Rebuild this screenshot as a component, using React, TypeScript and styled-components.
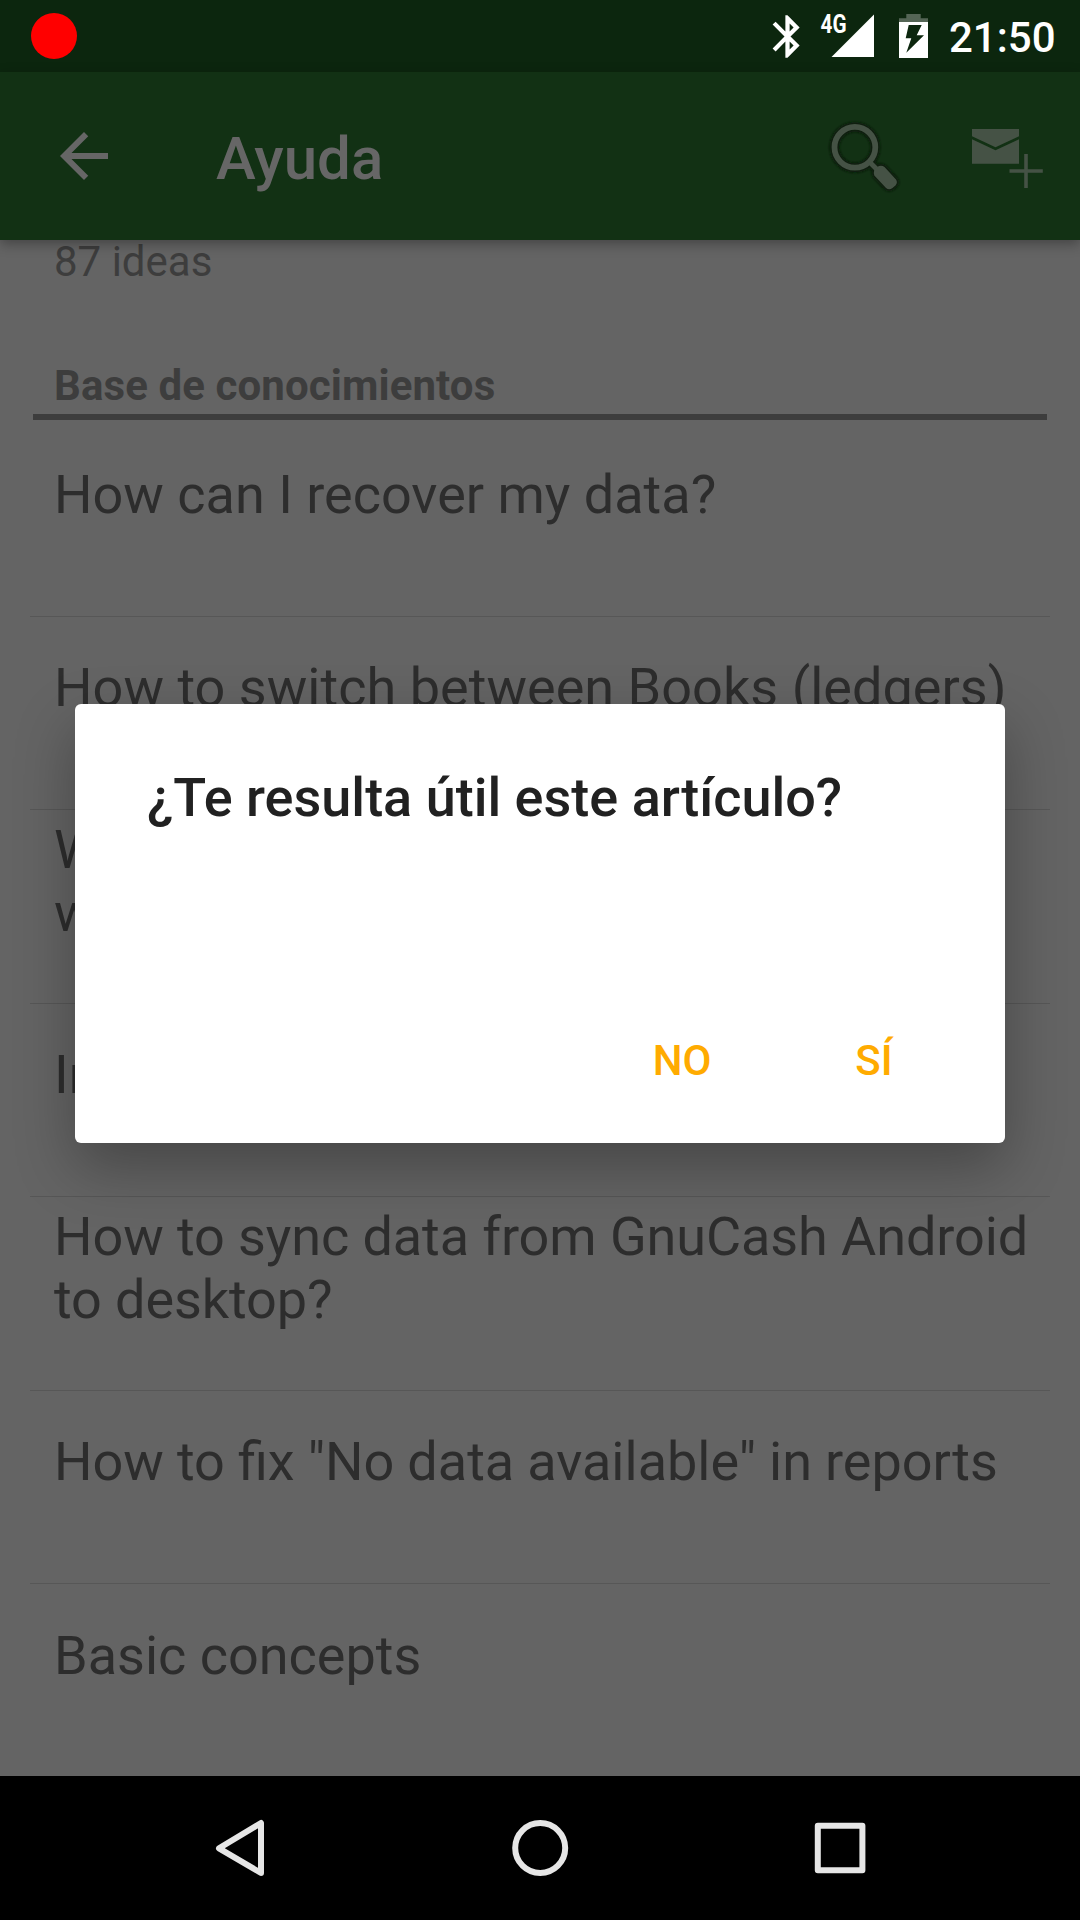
import React from 'react';
import styled, { createGlobalStyle } from 'styled-components';

const GlobalStyle = createGlobalStyle`
  *, *::before, *::after { box-sizing: border-box; }
  body { margin: 0; background: #000; }
  h1, h2, ul, p { margin: 0; padding: 0; }
`;

const Screen = styled.div`
  position: relative;
  width: 1080px;
  height: 1920px;
  overflow: hidden;
  display: flex;
  flex-direction: column;
  background: #646464;
  font-family: Roboto, "Noto Sans", sans-serif;
  font-kerning: normal;
`;

const StatusBar = styled.header`
  flex: none;
  height: 72px;
  display: flex;
  align-items: center;
  justify-content: space-between;
  padding: 0 25px 0 31px;
  background: #0c260e;
`;

const RecordDot = styled.span`
  width: 46px;
  height: 46px;
  border-radius: 50%;
  background: #f00;
`;

const StatusIcons = styled.div`
  height: 72px;
  display: flex;
  align-items: center;
`;

const Glyph = styled.svg<{ $w: number; $h: number; $ml?: number }>`
  display: block;
  flex: none;
  width: ${(p) => p.$w}px;
  height: ${(p) => p.$h}px;
  margin-left: ${(p) => p.$ml ?? 0}px;
`;

const Clock = styled.time`
  width: 106px;
  margin: 3px 0 0 21px;
  color: #fff;
  font-size: 42px;
  font-weight: 500;
  line-height: 50px;
  white-space: nowrap;
`;

const Toolbar = styled.div`
  position: relative;
  z-index: 1;
  flex: none;
  height: 168px;
  display: flex;
  align-items: center;
  padding: 0 24px 0 48px;
  background: #123114;
  box-shadow: 0 4px 12px rgba(0, 0, 0, 0.32);
`;

const IconButton = styled.button`
  display: flex;
  border: 0;
  padding: 0;
  background: none;
`;

const Title = styled.h1`
  flex: 1;
  margin: 6px 0 0 96px;
  color: #666;
  font-size: 60px;
  font-weight: 500;
  line-height: 70px;
`;

const Content = styled.main`
  flex: 1;
  min-height: 0;
  padding: 0 30px;
`;

const IdeaCount = styled.p`
  height: 49px;
  padding-left: 24px;
  color: #3d3d3d;
  font-size: 42px;
  line-height: 49px;
  margin-top: -3px;
`;

const SectionHeader = styled.h2`
  height: 60px;
  margin: 73.5px 3px 0;
  padding: 1px 0 0 21px;
  border-bottom: 6px solid #3d3d3d;
  color: #3d3d3d;
  font-size: 42px;
  font-weight: 700;
  letter-spacing: 0.1px;
  line-height: 49px;
`;

const ArticleList = styled.ul`
  list-style: none;
  padding-top: 4.2px;
`;

const Article = styled.li<{ $tracking?: number; $wordGap?: number }>`
  height: 193.4px;
  display: flex;
  align-items: center;
  padding: 0 10px 51px 24px;
  border-bottom: 1px solid #575757;
  color: #2d2d2d;
  font-size: 54px;
  letter-spacing: ${(p) => (p.$tracking ? `${p.$tracking}px` : 'normal')};
  word-spacing: ${(p) => p.$wordGap ?? 0}px;
  line-height: 63px;
  white-space: pre-line;
  &:last-child { border-bottom: 0; }
`;

const Dialog = styled.section`
  position: absolute;
  left: 75px;
  top: 704px;
  z-index: 2;
  width: 930px;
  height: 439px;
  display: flex;
  flex-direction: column;
  justify-content: space-between;
  padding: 62px 35px 38px 72px;
  border-radius: 6px;
  background: #fff;
  box-shadow: 0 24px 60px rgba(0, 0, 0, 0.3);
`;

const DialogTitle = styled.h2`
  color: #212121;
  font-size: 54px;
  font-weight: 500;
  line-height: 64px;
`;

const DialogActions = styled.div`
  display: flex;
  justify-content: flex-end;
`;

const ActionButton = styled.button`
  width: 192px;
  height: 88px;
  border: 0;
  padding: 0;
  background: none;
  color: #ffab00;
  font-family: inherit;
  font-size: 42px;
  font-weight: 500;
  line-height: 50px;
  text-align: center;
`;

const NavBar = styled.nav`
  flex: none;
  height: 144px;
  display: flex;
  align-items: center;
  justify-content: space-between;
  padding: 0 210px;
  background: #000;
`;

const articles: { title: string; tracking?: number; wordGap?: number }[] = [
  { title: 'How can I recover my data?' },
  { title: 'How to switch between Books (ledgers)', tracking: 0.03 },
  { title: 'Why are there imbalance accounts\nwhen importing?' },
  { title: 'Importing GnuCash desktop files' },
  { title: 'How to sync data from GnuCash Android to desktop?', tracking: -0.09 },
  { title: 'How to fix "No data available" in reports', wordGap: -0.35 },
  { title: 'Basic concepts' },
];

const BluetoothIcon = () => (
  <Glyph $w={51} $h={51} viewBox="0 0 24 24" fill="#fff">
    <path d="M17.71 7.71L12 2h-1v7.59L6.41 5 5 6.41 10.59 12 5 17.59 6.41 19 11 14.41V22h1l5.71-5.71-4.3-4.29 4.3-4.29zM13 5.83l1.88 1.88L13 9.59V5.83zm1.88 10.46L13 18.17v-3.76l1.88 1.88z" />
  </Glyph>
);

const SignalIcon = () => (
  <Glyph $w={54} $h={44} $ml={7} viewBox="820 14 54 44" fill="#fff">
    <path d="M874 14.500V57H831.500Z" />
    <text x="820.600" y="33.300" fontSize="25" fontWeight="700" textLength="26" lengthAdjust="spacingAndGlyphs">4G</text>
  </Glyph>
);

const BatteryIcon = () => (
  <Glyph $w={29} $h={44} $ml={25} viewBox="899 14 29 44">
    <path d="M906.300 14h14.400v4.300H928V22H899v-3.700h7.300z" fill="#546555" />
    <path fillRule="evenodd" fill="#fff" d="M899 22h29v36h-29zM908.700 25L905.700 38.300H911.300L906.300 52.700L924 35.300H916.700L921.700 25Z" />
  </Glyph>
);

const BackIcon = () => (
  <Glyph $w={72} $h={72} viewBox="0 0 24 24" fill="#666">
    <path d="M20 11H7.83l5.59-5.59L12 4l-8 8 8 8 1.41-1.41L7.83 13H20v-2z" />
  </Glyph>
);

const handlePath =
  'M874.300 170Q873.800 168.500 875.500 168L879 166Q882 165 884.500 167L896 179.500Q898 182.500 895.500 185.500L892.500 188Q889 190.500 886 188L874.300 175.500Q873.300 173 874.300 170Z';

const SearchIcon = () => (
  <Glyph $w={90} $h={92} viewBox="820 110 90 92">
    <defs>
      <filter id="halo" x="-20%" y="-20%" width="140%" height="140%">
        <feGaussianBlur stdDeviation="0.9" />
      </filter>
    </defs>
    <g fill="none" stroke="#0a1c0b" strokeLinejoin="round" filter="url(#halo)">
      <circle cx="854.900" cy="147.300" r="20.400" strokeWidth="10" />
      <path d="M869 161.500L876 168.500" strokeWidth="9" />
      <path d={handlePath} strokeWidth="4.500" />
    </g>
    <circle cx="854.900" cy="147.300" r="20.400" fill="none" stroke="#455245" strokeWidth="5.800" />
    <path d="M869 161.500L877 169.500" stroke="#455245" strokeWidth="5" />
    <path d={handlePath} fill="#455245" />
  </Glyph>
);

const MailAddIcon = () => (
  <Glyph $w={84} $h={92} $ml={62} viewBox="972 110 84 92" fill="#455245">
    <path d="M972 129H1019V136.300L995.500 147.200L972 136.300Z" />
    <path d="M972 139.300L995.500 150.300L1019 139.300V163.800H972Z" />
    <path d="M1024.200 154h3.600v15.200h15v3.500h-15V188h-3.600v-15.300h-14.700v-3.500h14.700z" />
  </Glyph>
);

export default function App() {
  return (
    <>
      <GlobalStyle />
      <Screen>
        <StatusBar>
          <RecordDot />
          <StatusIcons>
            <BluetoothIcon />
            <SignalIcon />
            <BatteryIcon />
            <Clock>21:50</Clock>
          </StatusIcons>
        </StatusBar>
        <Toolbar>
          <IconButton aria-label="Atrás"><BackIcon /></IconButton>
          <Title>Ayuda</Title>
          <IconButton aria-label="Buscar"><SearchIcon /></IconButton>
          <IconButton aria-label="Contactar"><MailAddIcon /></IconButton>
        </Toolbar>
        <Content>
          <IdeaCount>87 ideas</IdeaCount>
          <SectionHeader>Base de conocimientos</SectionHeader>
          <ArticleList>
            {articles.map(({ title, tracking, wordGap }) => (
              <Article key={title} $tracking={tracking} $wordGap={wordGap}><span>{title}</span></Article>
            ))}
          </ArticleList>
        </Content>
        <NavBar>
          <Glyph $w={60} $h={60} viewBox="210 1818 60 60" fill="none" stroke="#e6e6e6" strokeWidth="6" strokeLinejoin="round">
            <path d="M219 1848.300L261 1823V1873Z" />
          </Glyph>
          <Glyph $w={60} $h={60} viewBox="510 1818 60 60" fill="none" stroke="#e6e6e6" strokeWidth="6">
            <circle cx="540.200" cy="1848" r="25" />
          </Glyph>
          <Glyph $w={60} $h={60} viewBox="810 1818 60 60" fill="none" stroke="#e6e6e6" strokeWidth="6" strokeLinejoin="round">
            <rect x="817.800" y="1825.700" width="44.600" height="44.600" />
          </Glyph>
        </NavBar>
        <Dialog role="dialog">
          <DialogTitle>¿Te resulta útil este artículo?</DialogTitle>
          <DialogActions>
            <ActionButton>NO</ActionButton>
            <ActionButton>SÍ</ActionButton>
          </DialogActions>
        </Dialog>
      </Screen>
    </>
  );
}
